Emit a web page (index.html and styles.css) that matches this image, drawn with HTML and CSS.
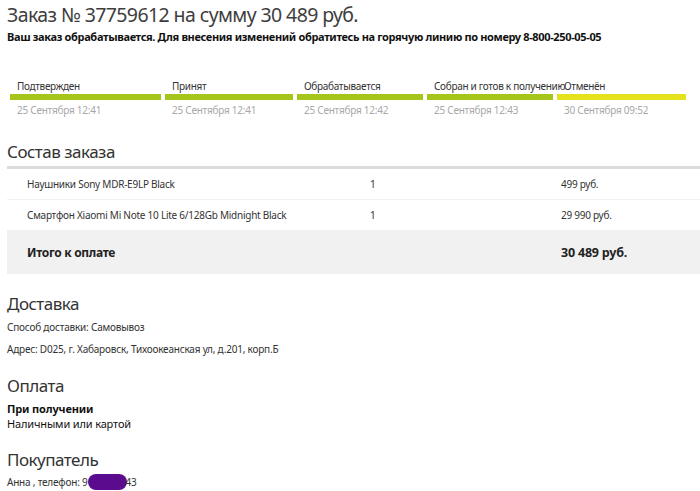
FILE: index.html
```html
<!DOCTYPE html>
<html lang="ru">
<head>
<meta charset="utf-8">
<title>Заказ № 37759612</title>
<link rel="stylesheet" href="styles.css">
</head>
<body>
<h1 class="title">Заказ № 37759612 на сумму 30 489 руб.</h1>
<p class="notice">Ваш заказ обрабатывается. Для внесения изменений обратитесь на горячую линию по номеру 8-800-250-05-05</p>

<div class="status">
  <div class="step">
    <div class="step-label">Подтвержден</div>
    <div class="step-bar"></div>
    <div class="step-date">25 Сентября 12:41</div>
  </div>
  <div class="step">
    <div class="step-label">Принят</div>
    <div class="step-bar"></div>
    <div class="step-date">25 Сентября 12:41</div>
  </div>
  <div class="step">
    <div class="step-label">Обрабатывается</div>
    <div class="step-bar"></div>
    <div class="step-date">25 Сентября 12:42</div>
  </div>
  <div class="step">
    <div class="step-label">Собран и готов к получению</div>
    <div class="step-bar"></div>
    <div class="step-date">25 Сентября 12:43</div>
  </div>
  <div class="step step-cancel">
    <div class="step-label">Отменён</div>
    <div class="step-bar"></div>
    <div class="step-date">30 Сентября 09:52</div>
  </div>
</div>

<h2 class="section-title first">Состав заказа</h2>
<div class="items">
  <div class="row">
    <div class="cell">Наушники Sony MDR-E9LP Black</div>
    <div class="cell">1</div>
    <div class="cell">499 руб.</div>
  </div>
  <div class="row">
    <div class="cell">Смартфон Xiaomi Mi Note 10 Lite 6/128Gb Midnight Black</div>
    <div class="cell">1</div>
    <div class="cell">29 990 руб.</div>
  </div>
  <div class="row total">
    <div class="cell">Итого к оплате</div>
    <div class="cell"></div>
    <div class="cell total-sum">30 489 руб.</div>
  </div>
</div>

<h2 class="section-title">Доставка</h2>
<p class="info">Способ доставки: Самовывоз</p>
<p class="info address">Адрес: D025, г. Хабаровск, Тихоокеанская ул, д.201, корп.Б</p>

<h2 class="section-title pay">Оплата</h2>
<div class="payment">
  <div class="pay-type">При получении</div>
  <div class="pay-way">Наличными или картой</div>
</div>

<h2 class="section-title buyer">Покупатель</h2>
<p class="info customer">Анна , телефон: 9<span class="redact">000000</span>43</p>
</body>
</html>
```

FILE: styles.css
```css
html, body {
  margin: 0;
  padding: 0;
  background: #fff;
}
body {
  padding: 0 0 0 7px;
  font-family: "Noto Sans", "Open Sans", sans-serif;
  color: #333;
  overflow: hidden;
}
.title {
  margin: 2px 0 0;
  font-size: 19.5px;
  line-height: 26px;
  letter-spacing: -0.6px;
  font-weight: normal;
  color: #3e3e3e;
}
.notice {
  margin: 1px 0 0;
  font-size: 11px;
  line-height: 16px;
  letter-spacing: -0.35px;
  font-weight: bold;
  color: #111;
  white-space: nowrap;
}
.status {
  margin: 34px 0 0 3px;
  display: grid;
  grid-template-columns: 151px 128px 126px 126px 129px;
  column-gap: 4px;
}
.step-label {
  padding-left: 7px;
  font-size: 10px;
  line-height: 14px;
  letter-spacing: -0.3px;
  color: #333;
  white-space: nowrap;
}
.step-bar {
  margin-top: 1px;
  height: 6px;
  background: #a6c51a;
}
.step-cancel .step-bar {
  background: #e5e11b;
}
.step-date {
  margin-top: 3px;
  padding-left: 7px;
  font-size: 10px;
  line-height: 14px;
  letter-spacing: -0.25px;
  color: #a8a8a8;
  white-space: nowrap;
}
.section-title {
  margin: 18px 0 0;
  font-size: 17px;
  line-height: 24px;
  letter-spacing: -0.5px;
  font-weight: normal;
  color: #333;
}
.section-title.first {
  margin-top: 23px;
}
.items {
  margin-top: 2px;
  border-top: 3px solid #dcdcdc;
}
.row {
  display: grid;
  grid-template-columns: 343px 191px 1fr;
  align-items: center;
  height: 30px;
  border-bottom: 1px solid #f1f1f1;
  font-size: 10px;
  letter-spacing: -0.25px;
  color: #333;
}
.cell {
  padding-left: 20px;
  white-space: nowrap;
}
.row.total {
  height: 43px;
  border-bottom: 0;
  background: #f1f1f1;
  font-size: 12px;
  letter-spacing: -0.3px;
  font-weight: bold;
  color: #222;
}
.row.total .total-sum {
  font-size: 12.5px;
  letter-spacing: -0.2px;
}
.info {
  margin: 4px 0 0;
  font-size: 10px;
  line-height: 14px;
  letter-spacing: -0.2px;
  color: #333;
}
.info.address {
  margin-top: 8px;
}
.section-title.pay {
  margin-top: 18px;
}
.payment {
  margin-top: 3px;
  font-size: 11px;
  line-height: 15px;
  letter-spacing: -0.15px;
  color: #111;
}
.pay-type {
  font-weight: bold;
}
.section-title.buyer {
  margin-top: 17px;
}
.info.customer {
  margin-top: 2px;
}
.redact {
  display: inline-block;
  width: 39px;
  height: 16px;
  border-radius: 8px;
  background: #5b0b8e;
  color: transparent;
  vertical-align: -4px;
  overflow: hidden;
  margin-left: 0;
  margin-right: -1px;
}
```
